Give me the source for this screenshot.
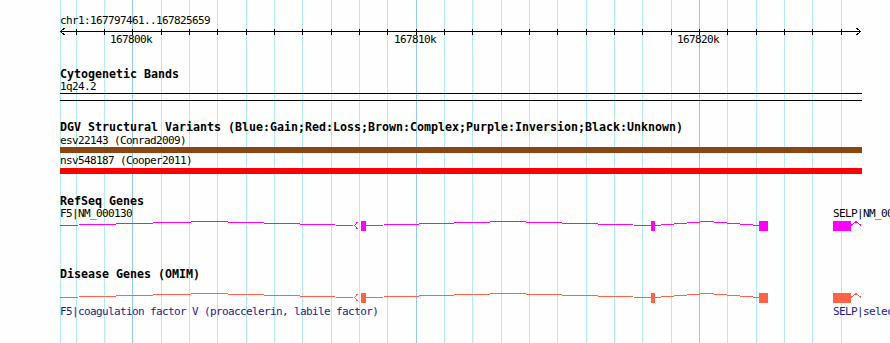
const START = 167797461;

// genomic position -> pixel column on the 800px track panel
const toPx = (pos) => Math.floor(60.9 + (pos - START) * 0.028333);

const gridKb = Array.from({ length: 28 }, (_, i) => 167798 + i);
const rulerKb = [167800, 167810, 167820];

const mono = "font-['DejaVu_Sans_Mono','Liberation_Mono',monospace]";
const small = "text-[11px] tracking-[-0.62px] leading-[12px]";

function Grid() {
  return (
    <svg className="absolute inset-0" width="890" height="343" shapeRendering="crispEdges">
      <line x1="60.5" x2="60.5" y1="0" y2="343" stroke="#b2ebf0" />
      {gridKb.map((kb) => {
        const x = toPx(kb * 1000) + 0.5;
        return (
          <line
            key={kb}
            x1={x}
            x2={x}
            y1="0"
            y2="343"
            stroke={kb % 10 === 0 ? "#92c9ec" : "#b2ebf0"}
          />
        );
      })}
    </svg>
  );
}

function Ruler() {
  return (
    <div className="relative h-[20px]">
      <svg width="890" height="10" className="block" shapeRendering="crispEdges">
        <line x1="60" x2="861" y1="4.5" y2="4.5" stroke="#000" />
        {gridKb.map((kb) => {
          const x = toPx(kb * 1000) + 0.5;
          return <line key={kb} x1={x} x2={x} y1="2" y2="8" stroke="#000" />;
        })}
        <polyline points="64.5,1 60.5,4.5 64.5,8" fill="none" stroke="#000" />
        <polyline points="856.5,1 860.5,4.5 856.5,8" fill="none" stroke="#000" />
      </svg>
      {rulerKb.map((kb) => (
        <span
          key={kb}
          className={`absolute top-[7px] text-black ${small}`}
          style={{ left: toPx(kb * 1000) - 22 }}
        >
          {kb}k
        </span>
      ))}
    </div>
  );
}

function GeneGlyph({ color }) {
  return (
    <svg width="890" height="12" className="block" shapeRendering="crispEdges">
      <g fill="none" stroke={color}>
        <polyline points="60,5.5 210,1.5 353,5.5" />
        <polyline points="357.5,2 354.5,5.5 357.5,9" />
        <polyline points="366,5.5 508,1.5 651,5.5" />
        <polyline points="655,5.5 707,1.5 759,5.5" />
        <polyline points="851,5.5 856,1.5 861,5.5" />
      </g>
      <g fill={color}>
        <rect x="361" y="1" width="5" height="10" />
        <rect x="651" y="1" width="4" height="10" />
        <rect x="759" y="1" width="9" height="10" />
        <rect x="833" y="1" width="18" height="10" />
      </g>
    </svg>
  );
}

function Title({ children, className = "" }) {
  return (
    <div className={`ml-[60px] text-[11.63px] leading-[11px] font-bold text-black whitespace-nowrap ${className}`}>
      {children}
    </div>
  );
}

function Label({ children, className = "" }) {
  return (
    <div className={`ml-[60px] text-black whitespace-nowrap ${small} ${className}`}>
      {children}
    </div>
  );
}

function LabelRow({ left, right, color = "text-black", className = "" }) {
  return (
    <div className={`relative h-[12px] whitespace-nowrap ${small} ${color} ${className}`}>
      <span className="absolute left-[60px] top-0">{left}</span>
      <span className="absolute left-[833px] top-0">{right}</span>
    </div>
  );
}

export default function App() {
  return (
    <div className={`relative w-[890px] h-[343px] overflow-hidden bg-[#fdfefd] ${mono}`}>
      <Grid />

      <div className="relative pt-[15px]">
        <Label>chr1:167797461..167825659</Label>
        <Ruler />

        <Title className="mt-[22px]">Cytogenetic Bands</Title>
        <Label className="mt-[1px]">1q24.2</Label>
        <svg width="890" height="8" className="block" shapeRendering="crispEdges">
          <line x1="60" x2="862" y1="0.5" y2="0.5" stroke="#000" />
          <line x1="60" x2="862" y1="7.5" y2="7.5" stroke="#000" />
        </svg>

        <Title className="mt-[21px]">
          DGV Structural Variants (Blue:Gain;Red:Loss;Brown:Complex;Purple:Inversion;Black:Unknown)
        </Title>
        <Label className="mt-[2px]">esv22143 (Conrad2009)</Label>
        <div className="ml-[60px] w-[802px] h-[6px] bg-[#8b4513]" />
        <Label className="mt-[2px]">nsv548187 (Cooper2011)</Label>
        <div className="ml-[60px] mt-[1px] w-[802px] h-[6px] bg-[#ff0000]" />

        <Title className="mt-[22px]">RefSeq Genes</Title>
        <LabelRow className="mt-[1px]" left="F5|NM_000130" right="SELP|NM_003005" />
        <GeneGlyph color="#ff00ff" />

        <Title className="mt-[37px]">Disease Genes (OMIM)</Title>
        <div className="mt-[12px]">
          <GeneGlyph color="#ff6347" />
        </div>
        <LabelRow
          className="mt-[2px]"
          color="text-[#1c1c90]"
          left="F5|coagulation factor V (proaccelerin, labile factor)"
          right="SELP|selectin P (granule membrane protein 140kDa, antigen CD62)"
        />
      </div>
    </div>
  );
}
